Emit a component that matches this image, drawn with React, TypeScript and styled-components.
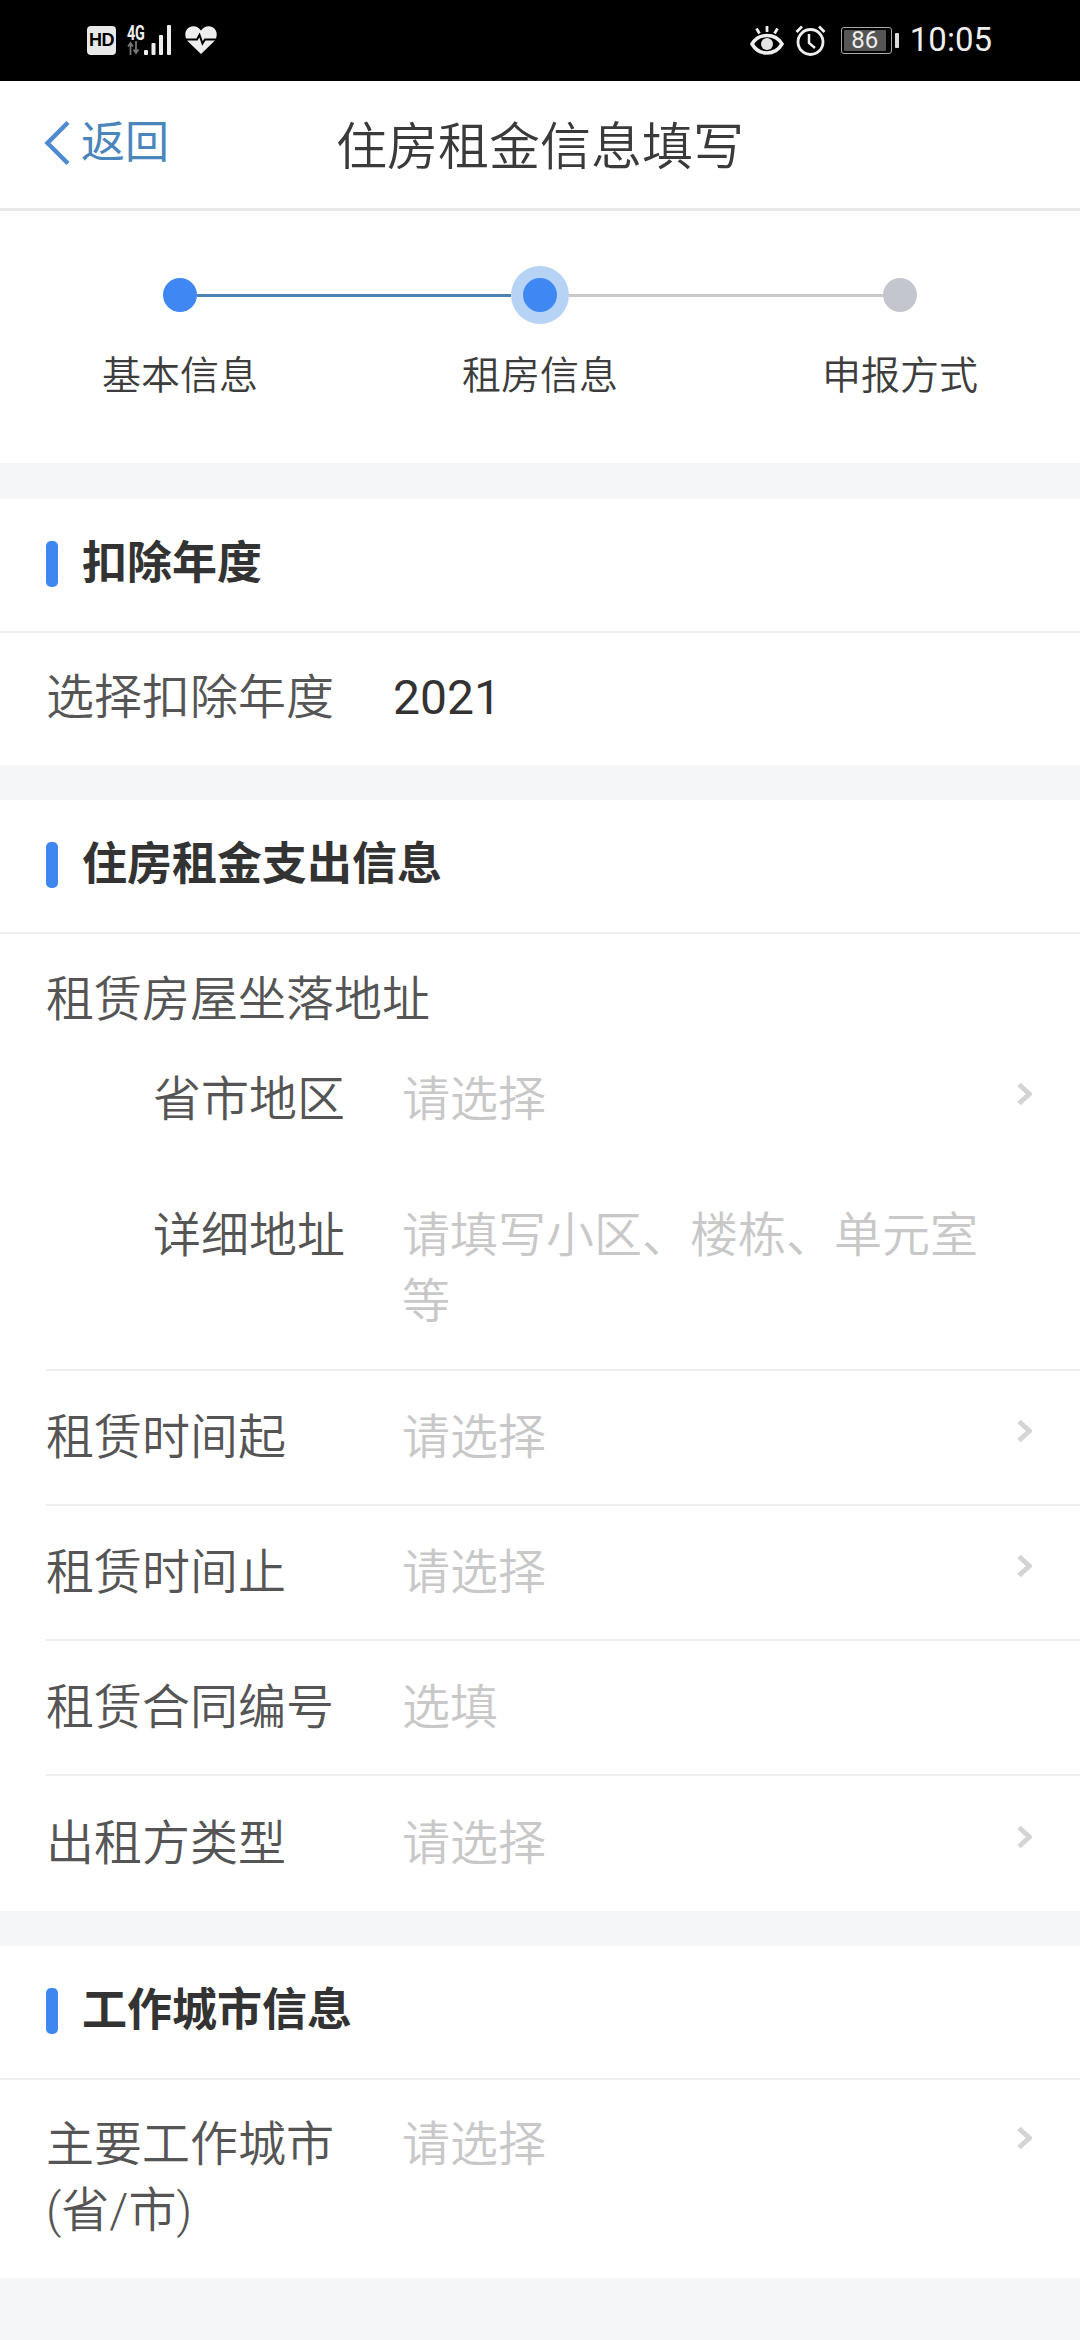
import React from "react";
import styled, { createGlobalStyle } from "styled-components";

const Global = createGlobalStyle`
  html, body { margin: 0; padding: 0; background: #f5f6f8; }
  body { font-family: Roboto, "Noto Sans CJK SC", sans-serif; }
  * { box-sizing: border-box; }
`;
const Page = styled.div`
  width: 1080px; height: 2340px; overflow: hidden; background: #f5f6f8;
  display: flex; flex-direction: column;
`;
const StatusBar = styled.div`
  height: 81px; flex: none; background: #000; color: #eee;
  display: flex; align-items: center; justify-content: space-between;
  padding: 0 88px 1px 87px;
`;
const StatusGroup = styled.div`display: flex; align-items: center;`;
const HdBadge = styled.div`
  width: 29px; height: 29px; border-radius: 4px; background: #e8e8e8; color: #000;
  font: 700 18px/29px "Liberation Sans", sans-serif; text-align: center; letter-spacing: -0.5px;
`;
const Network = styled.div`
  margin-left: 11px; width: 16px; height: 30px; display: flex; flex-direction: column;
  justify-content: space-between; align-items: flex-start;
`;
const NetText = styled.span`
  font: 700 20px/16px Roboto, sans-serif; color: #eee; letter-spacing: -0.5px; transform: scaleX(.72); transform-origin: left;
`;
const Battery = styled.div`
  margin-left: 15px; width: 51px; height: 27px; border: 1.5px solid #aaa; border-radius: 3px; padding: 2px;
`;
const BatteryFill = styled.div`
  height: 100%; background: #555; color: #eee; font: 400 24px/20px Roboto, sans-serif; text-align: center; width: 42px; border-radius: 1px;
`;
const BatteryCap = styled.div`width: 4px; height: 15px; margin-left: 3px; background: #ddd; border-radius: 1px;`;
const Time = styled.div`margin-left: 11px; font: 400 33px/40px Roboto, sans-serif; color: #eee;`;

const Nav = styled.div`
  height: 130px; flex: none; background: #fff; border-bottom: 3px solid #e6e7e9;
  display: grid; grid-template-columns: 1fr auto 1fr; align-items: center; padding: 0 44px 4px;
`;
const Back = styled.div`display: flex; align-items: center; gap: 11px; color: #4a86bb; font-size: 44px; line-height: 60px;`;
const Title = styled.div`font-size: 51px; line-height: 70px; color: #3a3a3a; font-family: "Noto Sans CJK SC", sans-serif; font-weight: 350;`;

const Stepper = styled.div`
  height: 252px; flex: none; background: #fff; padding-top: 55px; margin-bottom: 36px;
`;
const Track = styled.div`display: flex; align-items: center; padding: 0 163px; height: 58px;`;
const Dot = styled.div<{ $on?: boolean }>`
  width: 34px; height: 34px; flex: none; border-radius: 50%; background: ${p => (p.$on ? "#3f87f3" : "#c3c6cc")};
`;
const Halo = styled.div`
  width: 58px; height: 58px; flex: none; border-radius: 50%; background: #b6d3f6;
  display: flex; align-items: center; justify-content: center;
`;
const Line = styled.div<{ $on?: boolean }>`flex: 1; height: 3px; background: ${p => (p.$on ? "#4b83b5" : "#c9c9c9")};`;
const StepLabels = styled.div`display: grid; grid-template-columns: repeat(3, 360px); margin-top: 25px;`;
const StepLabel = styled.div`text-align: center; font-size: 39px; line-height: 54px; color: #3d3d3d; font-weight: 350;`;

const Section = styled.section`background: #fff; margin-bottom: 35px; flex: none;`;
const SectionHead = styled.div`
  height: 134px; border-bottom: 2px solid #eeeeee; display: flex; align-items: center; padding: 0 0 2px 46px; gap: 24px;
`;
const Bar = styled.div`width: 12px; height: 46px; border-radius: 5px; background: #3f87f0;`;
const SectionTitle = styled.div`font-size: 45px; line-height: 60px; font-weight: 700; color: #333;`;
const Rows = styled.div`padding-left: 46px;`;
const Row = styled.div<{ $last?: boolean }>`
  height: 135px; display: flex; align-items: center;
  border-bottom: ${p => (p.$last ? "none" : "2px solid #eeeeee")};
`;
const YearRow = styled(Row)`height: 132px; padding-bottom: 2px;`;
const Label = styled.div`
  width: 356px; flex: none; font-size: 48px; line-height: 66px; color: #555; font-weight: 350;
`;
const YearLabel = styled(Label)`width: auto;`;
const Value = styled.div`font: 400 48px/66px Roboto, sans-serif; color: #333; margin-left: 59px;`;
const Placeholder = styled.div`flex: 1; font-size: 48px; line-height: 66px; color: #c8c8c8; font-weight: 350;`;
const ChevronSlot = styled.div<{ $top?: number }>`
  width: 48px; flex: none; display: flex; margin-top: ${p => p.$top ?? -13}px; margin-right: 48px; justify-content: flex-end;
`;
const GroupLabel = styled.div`
  font-size: 48px; line-height: 66px; color: #555; font-weight: 350; padding-top: 33px;
`;
const SubRow = styled.div<{ $top: number }>`display: flex; align-items: flex-start; padding-top: ${p => p.$top}px;`;
const SubLabel = styled.div`
  width: 356px; flex: none; padding-left: 107px; font-size: 48px; line-height: 66px; color: #555; font-weight: 350;
`;
const AddressBlock = styled.div`border-bottom: 2px solid #eeeeee; height: 437px;`;
const AddressPlaceholder = styled(Placeholder)`padding-right: 80px;`;
const TallRow = styled.div`display: flex; align-items: flex-start; padding: 32px 0 34px;`;

const Chevron = () => (
  <svg width="15" height="24" viewBox="0 0 15 24">
    <path d="M2 2.500 L12.500 12 L2 21.500" fill="none" stroke="#d4d4d4" strokeWidth="5" />
  </svg>
);

const Arrow = () => (
  <svg width="13" height="14" viewBox="0 0 13 14">
    <path d="M3.500 14V3M1 5.500 3.500 2 6 5.500M9 0v11M6.500 8.500 9 12l2.500-3.500" fill="none" stroke="#777" strokeWidth="1.800" />
  </svg>
);

const Signal = () => (
  <svg width="32" height="31" viewBox="0 0 32 31" style={{ marginLeft: 1 }}>
    <g fill="#eee">
      <rect x="0" y="25" width="4" height="5" rx="1" />
      <rect x="7.500" y="18" width="4" height="12" rx="1" />
      <rect x="15" y="10" width="4" height="20" rx="1" />
      <rect x="23" y="0" width="4" height="30" rx="1" />
    </g>
  </svg>
);

const Heart = () => (
  <svg width="32" height="30" viewBox="0 0 32 30" style={{ marginLeft: 9 }}>
    <path d="M16 29 3 16.500C-1 12-.5 5 4 2.500 8.500 0 13 1.500 16 5.500 19 1.500 23.500 0 28 2.500c4.500 2.500 5 9.500 1 14z" fill="#eee" />
    <path d="M0 14.500h12l2.500-4.500 3 8.500 2.500-4h12" fill="none" stroke="#000" strokeWidth="2" />
  </svg>
);

const Eye = () => (
  <svg width="34" height="30" viewBox="0 0 34 30">
    <path d="M2 19C5.500 13 10.500 10.500 17 10.500S28.500 13 32 19C28.500 25 23.500 28 17 28S5.500 25 2 19z" fill="none" stroke="#eee" strokeWidth="3.500" />
    <circle cx="17" cy="19" r="6" fill="#e4e4e4" />
    <path d="M17 1v6M6.500 3.500l3 5M27.500 3.500l-3 5" stroke="#eee" strokeWidth="2.800" />
  </svg>
);

const Alarm = () => (
  <svg width="31" height="31" viewBox="0 0 31 31" style={{ marginLeft: 11 }}>
    <circle cx="15.500" cy="17" r="12.500" fill="none" stroke="#eee" strokeWidth="2.800" />
    <path d="M14 9v9l6 5" fill="none" stroke="#eee" strokeWidth="2.500" />
    <path d="M1.500 7 7 1.500M29.500 7 24 1.500" stroke="#eee" strokeWidth="2.800" />
  </svg>
);

const BackIcon = () => (
  <svg width="26" height="46" viewBox="0 0 26 46">
    <path d="M24 2.500 3.500 23 24 43.500" fill="none" stroke="#4f8bd0" strokeWidth="4.500" />
  </svg>
);

const SelectRow = ({ label, last }: { label: string; last?: boolean }) => (
  <Row $last={last}>
    <Label>{label}</Label>
    <Placeholder>请选择</Placeholder>
    <ChevronSlot><Chevron /></ChevronSlot>
  </Row>
);

export default function App() {
  return (
    <Page>
      <Global />
      <StatusBar>
        <StatusGroup>
          <HdBadge>HD</HdBadge>
          <Network><NetText>4G</NetText><Arrow /></Network>
          <Signal />
          <Heart />
        </StatusGroup>
        <StatusGroup>
          <Eye />
          <Alarm />
          <Battery><BatteryFill>86</BatteryFill></Battery>
          <BatteryCap />
          <Time>10:05</Time>
        </StatusGroup>
      </StatusBar>
      <Nav>
        <Back><BackIcon />返回</Back>
        <Title>住房租金信息填写</Title>
        <div />
      </Nav>
      <Stepper>
        <Track>
          <Dot $on />
          <Line $on />
          <Halo><Dot $on /></Halo>
          <Line />
          <Dot />
        </Track>
        <StepLabels>
          <StepLabel>基本信息</StepLabel>
          <StepLabel>租房信息</StepLabel>
          <StepLabel>申报方式</StepLabel>
        </StepLabels>
      </Stepper>
      <Section>
        <SectionHead><Bar /><SectionTitle>扣除年度</SectionTitle></SectionHead>
        <Rows>
          <YearRow $last>
            <YearLabel>选择扣除年度</YearLabel>
            <Value>2021</Value>
          </YearRow>
        </Rows>
      </Section>
      <Section>
        <SectionHead><Bar /><SectionTitle>住房租金支出信息</SectionTitle></SectionHead>
        <Rows>
          <AddressBlock>
            <GroupLabel>租赁房屋坐落地址</GroupLabel>
            <SubRow $top={34}>
              <SubLabel>省市地区</SubLabel>
              <Placeholder>请选择</Placeholder>
              <ChevronSlot $top={15}><Chevron /></ChevronSlot>
            </SubRow>
            <SubRow $top={70}>
              <SubLabel>详细地址</SubLabel>
              <AddressPlaceholder>请填写小区、楼栋、单元室等</AddressPlaceholder>
            </SubRow>
          </AddressBlock>
          <SelectRow label="租赁时间起" />
          <SelectRow label="租赁时间止" />
          <Row>
            <Label>租赁合同编号</Label>
            <Placeholder>选填</Placeholder>
          </Row>
          <SelectRow label="出租方类型" last />
        </Rows>
      </Section>
      <Section>
        <SectionHead><Bar /><SectionTitle>工作城市信息</SectionTitle></SectionHead>
        <Rows>
          <TallRow>
            <Label>主要工作城市<br />(省/市)</Label>
            <Placeholder>请选择</Placeholder>
            <ChevronSlot $top={14}><Chevron /></ChevronSlot>
          </TallRow>
        </Rows>
      </Section>
    </Page>
  );
}
